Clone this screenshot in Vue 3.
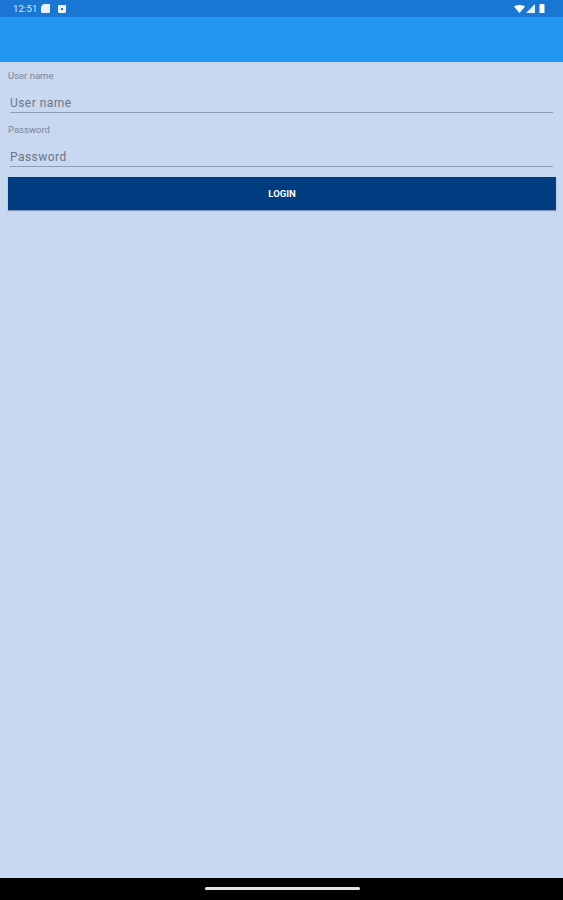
<template>
  <div class="screen">
    <header class="status">
      <div class="status-left">
        <span class="time">12:51</span>
        <svg class="ic" width="9" height="9" viewBox="0 0 9 9"><path d="M2.500 0H8a1 1 0 0 1 1 1v7a1 1 0 0 1-1 1H1a1 1 0 0 1-1-1V2.500z" fill="#e8f0fa"/></svg>
        <svg class="ic gap2" width="8" height="8" viewBox="0 0 8 8"><path fill-rule="evenodd" d="M1 0h6a1 1 0 0 1 1 1v6a1 1 0 0 1-1 1H1a1 1 0 0 1-1-1V1a1 1 0 0 1 1-1zM3 3v2h2V3z" fill="#e8f0fa"/></svg>
      </div>
      <div class="status-right">
        <svg width="11" height="8" viewBox="0 0 11 8"><path d="M0 1.500C3 -.5 8 -.5 11 1.500L5.500 8z" fill="#fff"/></svg>
        <svg width="9" height="9" viewBox="0 0 9 9"><path d="M9 0v9H0z" fill="#e6eef9"/></svg>
        <svg class="batt" width="6" height="9" viewBox="0 0 6 9"><path d="M1.500 0h3a1 1 0 0 1 1 1v8H.5V1a1 1 0 0 1 1-1z" fill="#fff"/></svg>
      </div>
    </header>
    <div class="appbar"></div>
    <main class="content">
      <label class="cap">User name</label>
      <div class="field">User name</div>
      <label class="cap second">Password</label>
      <div class="field">Password</div>
      <button class="login">LOGIN</button>
    </main>
    <footer class="nav"><span class="pill"></span></footer>
  </div>
</template>

<script setup>
</script>

<style scoped>
.screen {
  width: 563px;
  height: 900px;
  display: flex;
  flex-direction: column;
  background: #c8d8f1;
  font-family: Roboto, "Liberation Sans", sans-serif;
  overflow: hidden;
}
.status {
  height: 17px;
  flex: none;
  background: #1976d2;
  display: flex;
  align-items: center;
  justify-content: space-between;
  padding: 0 18px 0 13px;
}
.status-left, .status-right { display: flex; align-items: center; }
.status-left { gap: 4px; }
.status-right { gap: 1px; }
.batt { margin-left: 3px; }
.gap2 { margin-left: 4px; }
.time { font-size: 9.500px; color: #dfe9f7; letter-spacing: .15px; }
.appbar {
  height: 45px;
  flex: none;
  background: #2196f3;
}
.content {
  flex: 1;
  display: flex;
  flex-direction: column;
  padding: 9px 7px 0 8px;
}
.cap {
  font-size: 9.500px;
  line-height: 10px;
  color: #7a8596;
}
.second { margin-top: 12px; }
.field {
  margin: 13px 3px 0 2px;
  height: 18px;
  line-height: 19px;
  font-size: 12px;
  letter-spacing: .45px;
  color: #6b7588;
  border-bottom: 1px solid #8f9db3;
}
.login {
  margin-top: 10px;
  height: 33px;
  border: none;
  padding: 0;
  background: #003c80;
  color: #fff;
  font-family: inherit;
  font-size: 9.500px;
  font-weight: 700;
  box-shadow: 0 1px 1px rgba(0, 30, 80, .35);
}
.nav {
  height: 22px;
  flex: none;
  background: #000;
  display: flex;
  justify-content: center;
  align-items: center;
  padding-bottom: 1px;
  box-sizing: border-box;
}
.pill {
  width: 155px;
  height: 3px;
  border-radius: 2px;
  background: #e4e4e4;
  margin-left: 1px;
}
</style>
